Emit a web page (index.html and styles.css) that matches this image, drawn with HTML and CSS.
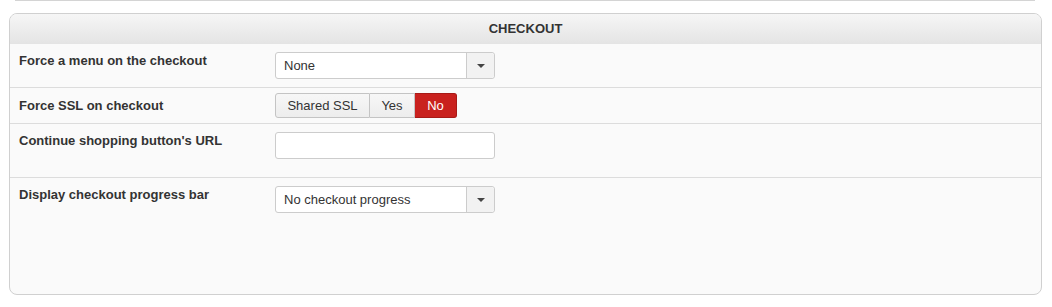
FILE: index.html
```html
<!DOCTYPE html>
<html>
  <head>
    <link rel="stylesheet" href="styles.css">
  </head>

  <body>
    <!-- end of the panel above -->
    <div class="prev-edge"></div>

    <!-- checkout panel -->
    <div class="panel">
      <div class="panel-head">CHECKOUT</div>

      <div class="row">
        <div class="label">Force a menu on the checkout</div>
        <div class="select">
          <span class="select-text">None</span>
          <span class="select-arrow"><span class="caret"></span></span>
        </div>
      </div>

      <div class="row row-tight">
        <div class="label">Force SSL on checkout</div>
        <div class="btn-group">
          <span class="btn btn-shared">Shared SSL</span>
          <span class="btn btn-yes">Yes</span>
          <span class="btn btn-no active">No</span>
        </div>
      </div>

      <div class="row row-url">
        <div class="label">Continue shopping button's URL</div>
        <div class="text-input"></div>
      </div>

      <div class="row row-last">
        <div class="label">Display checkout progress bar</div>
        <div class="select">
          <span class="select-text">No checkout progress</span>
          <span class="select-arrow"><span class="caret"></span></span>
        </div>
      </div>
    </div>
  </body>
</html>
```

FILE: styles.css
```css
body {
  font-family: "Liberation Sans", Arial, sans-serif;
  font-size: 13px;
  color: #333;
  margin: 0;
  height: 307px;
  overflow: hidden;
}

.prev-edge {
  height: 1px;
  margin: 0 17px 0 15px;
  background: #d4d4d4;
}

.panel {
  margin: 12px 10px 0 9px;
  height: 280px;
  border: 1px solid #d0d0d0;
  border-radius: 8px;
  background: #fafafa;
  display: flex;
  flex-direction: column;
  overflow: hidden;
}

.panel-head {
  height: 30px;
  line-height: 30px;
  text-align: center;
  font-weight: bold;
  background: linear-gradient(#f6f6f6, #e4e4e4);
}

.row {
  display: flex;
  align-items: flex-start;
  padding: 8px 0 8px 9px;
  border-bottom: 1px solid #dcdcdc;
}

.row-tight {
  padding-top: 5px;
  padding-bottom: 5px;
}

.row-tight .label {
  padding-top: 4px;
}

.row-url {
  padding-bottom: 18px;
}

.row-last {
  flex: 1;
  border-bottom: none;
}

.label {
  width: 256px;
  font-weight: bold;
  line-height: 18px;
}

.select {
  width: 218px;
  height: 25px;
  border: 1px solid #ccc;
  border-radius: 3px;
  background: #fff;
  display: flex;
}

.select-text {
  flex: 1;
  padding-left: 8px;
  line-height: 25px;
}

.select-arrow {
  width: 27px;
  border-left: 1px solid #ccc;
  background: #f2f2f2;
  border-radius: 0 3px 3px 0;
  display: flex;
  align-items: center;
  justify-content: center;
}

.caret {
  width: 0;
  height: 0;
  border-left: 4px solid transparent;
  border-right: 4px solid transparent;
  border-top: 4px solid #444;
}

.btn-group {
  display: flex;
}

.btn {
  height: 23px;
  line-height: 23px;
  text-align: center;
  border: 1px solid #c4c4c4;
  background: linear-gradient(#f7f7f7, #ededed);
}

.btn + .btn {
  border-left: none;
}

.btn-shared {
  width: 93px;
  border-radius: 3px 0 0 3px;
}

.btn-yes {
  width: 44px;
}

.btn-no {
  width: 41px;
  border-radius: 0 3px 3px 0;
}

.btn.active {
  background: #c9211e;
  border-color: #a71a17;
  color: #fff;
}

.text-input {
  width: 218px;
  height: 25px;
  border: 1px solid #ccc;
  border-radius: 3px;
  background: #fff;
}
```
